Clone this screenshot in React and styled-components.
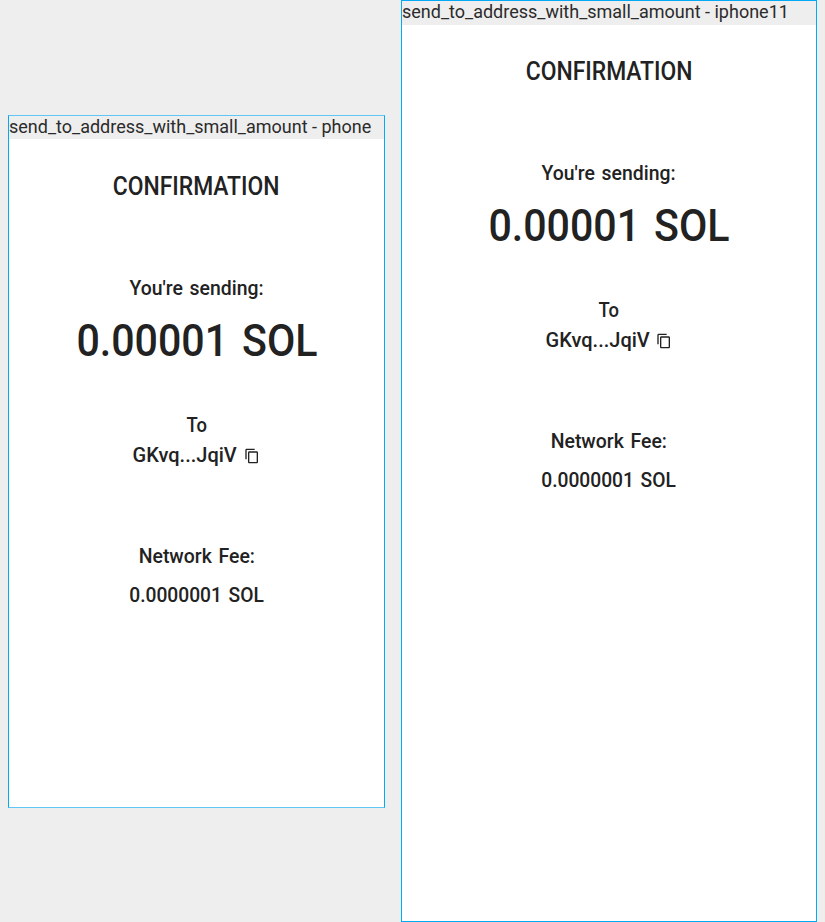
import React from "react";
import styled, { createGlobalStyle } from "styled-components";

const GlobalStyle = createGlobalStyle`
  *, *::before, *::after { box-sizing: border-box; }
  body { margin: 0; background: #eeeeee; overflow: hidden; }
`;
const Board = styled.main`
  display: flex;
  align-items: flex-end;
  gap: 16px;
  width: 825px;
  height: 922px;
  padding-left: 8px;
`;
const Device = styled.section`
  display: flex;
  flex-direction: column;
  width: ${(p) => p.$width}px;
  height: ${(p) => p.$height}px;
  margin-bottom: ${(p) => p.$offset}px;
  border: 1px solid #03a9f4;
  border-top-color: ${(p) => p.$edge};
  border-bottom-color: ${(p) => p.$edge};
  background: #ffffff;
`;
const Label = styled.header`
  height: ${(p) => p.$height}px;
  margin-bottom: ${(p) => 24 - p.$height}px;
  flex: none;
  background: #eeeeee;
  color: #2b2b2b;
  font: 400 18px/22px Roboto, sans-serif;
  white-space: nowrap;
`;
const Screen = styled.div`
  display: flex;
  flex-direction: column;
  align-items: center;
  color: #222222;
  font-family: Roboto, sans-serif;
  font-weight: 500;
`;
const Line = styled.div`
  display: flex;
  align-items: center;
  justify-content: center;
  height: ${(p) => p.$height}px;
  margin-top: ${(p) => p.$gap}px;
  font-size: ${(p) => p.$size}px;
  white-space: nowrap;
`;
const Condensed = styled.span`
  display: inline-block;
  transform: scaleX(${(p) => p.$scale});
  word-spacing: ${(p) => p.$space || 0}px;
`;
const CopyIcon = styled.svg`
  width: 16px;
  height: 16px;
  margin: 1px 3px 0 4.5px;
  fill: #222222;
`;
function Confirmation({ name, width, height, offset, labelHeight, edge }) {
  return (
    <Device $width={width} $height={height} $offset={offset} $edge={edge}>
      <Label $height={labelHeight}>{name}</Label>
      <Screen>
        <Line $height={30} $gap={31.5} $size={25}><Condensed $scale={0.915}>CONFIRMATION</Condensed></Line>
        <Line $height={26} $gap={73.5} $size={21}><Condensed $scale={0.925} $space={2}>You're sending:</Condensed></Line>
        <Line $height={54} $gap={13} $size={44}><Condensed $scale={0.935} $space={4}>0.00001 SOL</Condensed></Line>
        <Line $height={26} $gap={44} $size={21}><Condensed $scale={0.88}>To</Condensed></Line>
        <Line $height={26} $gap={4} $size={21}>
          <Condensed $scale={0.953}>GKvq...JqiV</Condensed>
          <CopyIcon viewBox="0 0 24 24">
            <path d="M16 1H4c-1.1 0-2 .9-2 2v14h2V3h12V1zm3 4H8c-1.1 0-2 .9-2 2v14c0 1.1.9 2 2 2h11c1.1 0 2-.9 2-2V7c0-1.1-.9-2-2-2zm0 16H8V7h11v14z" />
          </CopyIcon>
        </Line>
        <Line $height={26} $gap={75} $size={21}><Condensed $scale={0.925} $space={2}>Network Fee:</Condensed></Line>
        <Line $height={26} $gap={13} $size={21}><Condensed $scale={0.915} $space={2}>0.0000001 SOL</Condensed></Line>
      </Screen>
    </Device>
  );
}
export default function App() {
  return (
    <>
      <GlobalStyle />
      <Board>
        <Confirmation name="send_to_address_with_small_amount - phone" width={377} height={693} offset={114} labelHeight={23} edge="#62c6f5" />
        <Confirmation name="send_to_address_with_small_amount - iphone11" width={416} height={922} offset={0} labelHeight={24} edge="#03a9f4" />
      </Board>
    </>
  );
}
